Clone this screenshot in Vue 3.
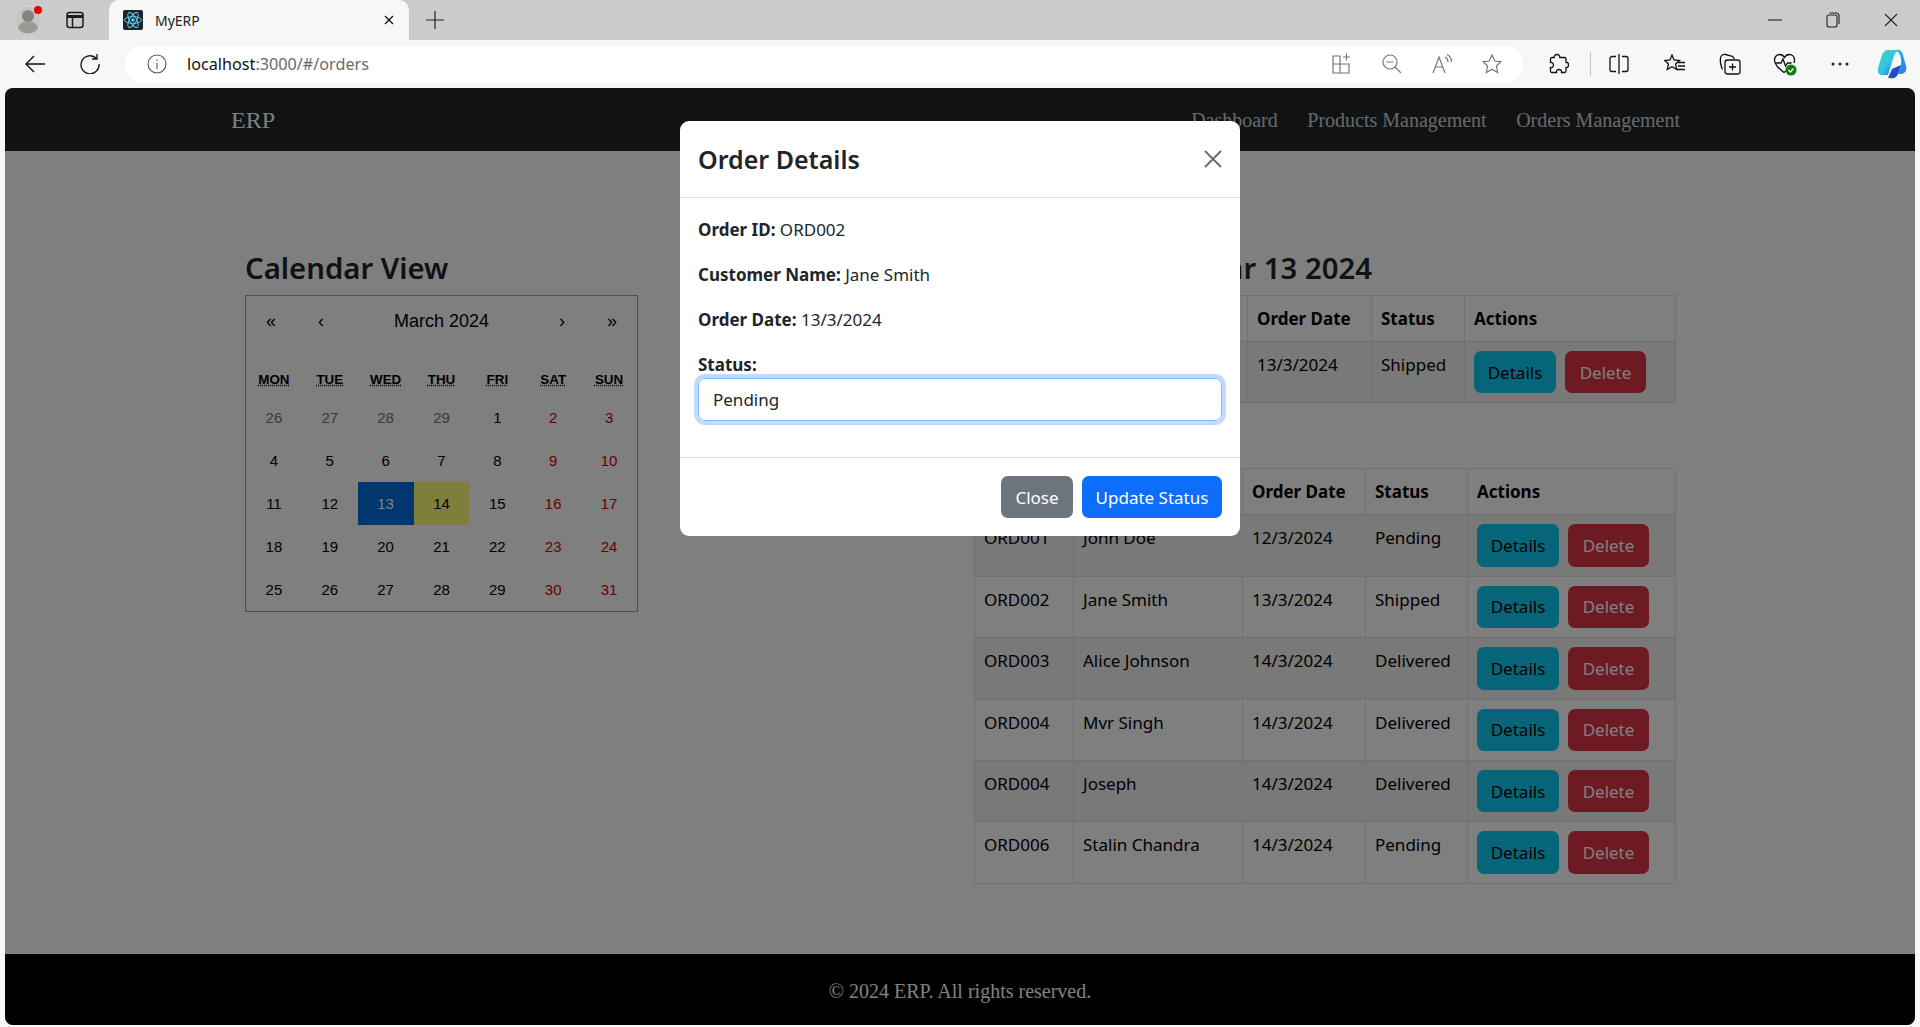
<script setup>
const weekdays = ['Mon', 'Tue', 'Wed', 'Thu', 'Fri', 'Sat', 'Sun']

const days = []
for (const d of [26, 27, 28, 29]) days.push({ n: d, cls: 'other' })
for (let d = 1; d <= 31; d++) {
  const col = days.length % 7
  let cls = col >= 5 ? 'weekend' : ''
  if (d === 13) cls = 'active'
  if (d === 14) cls = 'today'
  days.push({ n: d, cls })
}

const allOrders = [
  { id: 'ORD001', name: 'John Doe', date: '12/3/2024', status: 'Pending' },
  { id: 'ORD002', name: 'Jane Smith', date: '13/3/2024', status: 'Shipped' },
  { id: 'ORD003', name: 'Alice Johnson', date: '14/3/2024', status: 'Delivered' },
  { id: 'ORD004', name: 'Mvr Singh', date: '14/3/2024', status: 'Delivered' },
  { id: 'ORD004', name: 'Joseph', date: '14/3/2024', status: 'Delivered' },
  { id: 'ORD006', name: 'Stalin Chandra', date: '14/3/2024', status: 'Pending' },
]
const dayOrders = allOrders.filter((o) => o.date === '13/3/2024')

const tables = [
  { cls: 'first', title: 'Orders for Wed Mar 13 2024', rows: dayOrders },
  { cls: 'second', title: 'All Orders', rows: allOrders },
]
</script>

<template>
  <div class="window">
    <div class="tabstrip">
      <div class="profile">
        <svg width="32" height="32" viewBox="0 0 32 32">
          <circle cx="16" cy="16" r="14" fill="#c6c5c2" stroke="#d8d8d6" />
          <circle cx="16" cy="12" r="6" fill="#85827e" />
          <path d="M6 25c1-6 5-7.500 10-7.500s9 1.500 10 7.500c-2.500 3-6 4.500-10 4.500s-7.500-1.500-10-4.500z" fill="#9c9994" />
          <circle cx="26" cy="6" r="4" fill="#e60000" />
        </svg>
      </div>
      <svg class="tabs-icon" width="18" height="18" viewBox="0 0 18 18" fill="none" stroke="#1b1b1b" stroke-width="1.500">
        <rect x="1" y="1.500" width="16" height="15" rx="2.500" />
        <path d="M6.500 6v10.500" />
        <path d="M1 5.500h16" stroke-width="3" />
      </svg>
      <div class="tab">
        <svg width="20" height="20" viewBox="0 0 20 20">
          <rect width="20" height="20" rx="2" fill="#20232a" />
          <g fill="none" stroke="#61dafb" stroke-width="0.900">
            <ellipse cx="10" cy="10" rx="8.500" ry="3.400" />
            <ellipse cx="10" cy="10" rx="8.500" ry="3.400" transform="rotate(60 10 10)" />
            <ellipse cx="10" cy="10" rx="8.500" ry="3.400" transform="rotate(120 10 10)" />
          </g>
          <circle cx="10" cy="10" r="1.700" fill="#61dafb" />
        </svg>
        <span class="tab-title">MyERP</span>
        <svg class="tab-close" width="10" height="10" viewBox="0 0 10 10" stroke="#111" stroke-width="1.300">
          <path d="M1 1l8 8M9 1l-8 8" />
        </svg>
      </div>
      <svg class="new-tab" width="18" height="18" viewBox="0 0 18 18" stroke="#222" stroke-width="1.200">
        <path d="M9 0v18M0 9h18" />
      </svg>
      <div class="win-controls">
        <svg width="14" height="14" viewBox="0 0 14 14" stroke="#222" stroke-width="1.100"><path d="M0 7h14" /></svg>
        <svg width="14" height="16" viewBox="0 0 14 16" fill="none" stroke="#222" stroke-width="1.100">
          <rect x="1" y="3" width="10" height="12" rx="2" />
          <path d="M3.500 1h6.500a3 3 0 0 1 3 3v8" />
        </svg>
        <svg width="14" height="14" viewBox="0 0 14 14" stroke="#222" stroke-width="1.100"><path d="M1 1l12 12M13 1L1 13" /></svg>
      </div>
    </div>

    <div class="toolbar">
      <svg class="tool-back" width="22" height="20" viewBox="0 0 22 20" fill="none" stroke="#111" stroke-width="1.400">
        <path d="M21 10H2M10 2l-8 8 8 8" />
      </svg>
      <svg class="tool-reload" width="20" height="20" viewBox="0 0 20 20" fill="none" stroke="#111" stroke-width="1.300">
        <path d="M16.500 4.500A9 9 0 1 0 19 10" />
        <path d="M17 0v5h-5" />
      </svg>
      <div class="address">
        <svg width="20" height="20" viewBox="0 0 20 20" fill="none" stroke="#555" stroke-width="1.100">
          <circle cx="10" cy="10" r="9" />
          <path d="M10 9v6M10 5.500v1.500" />
        </svg>
        <span class="url"><span class="host">localhost</span>:3000/#/orders</span>
        <div class="addr-icons">
          <svg width="20" height="22" viewBox="0 0 20 22" fill="none" stroke="#777" stroke-width="1.200">
            <path d="M1 3h7v8h9v9H1zM1 11h7v9M8 11v9" />
            <path d="M11 4h7M14.500 0.500v7" />
          </svg>
          <svg width="20" height="20" viewBox="0 0 20 20" fill="none" stroke="#777" stroke-width="1.200">
            <circle cx="8" cy="8" r="7" />
            <path d="M4.500 8h7M13 13l6 6" />
          </svg>
          <svg width="20" height="20" viewBox="0 0 20 20" fill="none" stroke="#777" stroke-width="1.200">
            <path d="M1 19L7 3l6 16M3 13h8" />
            <path d="M13 3c2 1 3 3 3 5M15 0.500c3 1.500 4.500 4.500 4.500 7.500" />
          </svg>
          <svg width="20" height="20" viewBox="0 0 20 20" fill="none" stroke="#777" stroke-width="1.200">
            <path d="M10 1l2.800 6 6.200.700-4.600 4.300 1.300 6.500L10 15.300 4.300 18.500 5.600 12 1 7.700 7.200 7z" />
          </svg>
        </div>
      </div>
      <div class="tool-icons">
        <svg class="ic-ext" width="20" height="22" viewBox="0 0 20 22" fill="none" stroke="#111" stroke-width="1.300">
          <path d="M8 1.500c2 0 3 1.500 2.800 3h4.700a1.500 1.500 0 0 1 1.500 1.500v3.500c2-.5 2.500 1 2.500 2.500s-1 3-2.500 2.500V18a1.500 1.500 0 0 1-1.500 1.500h-3c.5-2-1-3-2.500-3s-3 1-2.500 3H3A1.500 1.500 0 0 1 1.500 18v-3.500c2 .5 3-1 3-2.500S3 9 1.500 9.500V6A1.500 1.500 0 0 1 3 4.500h2.200C5 3 6 1.500 8 1.500z" />
        </svg>
        <span class="sep"></span>
        <svg class="ic-split" width="20" height="20" viewBox="0 0 20 20" fill="none" stroke="#111" stroke-width="1.300">
          <path d="M7 2.500H3A2 2 0 0 0 1 4.500v11a2 2 0 0 0 2 2h4M13 2.500h4a2 2 0 0 1 2 2v11a2 2 0 0 1-2 2h-4M10 0v20" />
        </svg>
        <svg class="ic-fav" width="22" height="20" viewBox="0 0 22 20" fill="none" stroke="#111" stroke-width="1.300">
          <path d="M8 1l2 5 5.500.500-4 3.500 1.300 5.500L8 12.700 3.200 15.500 4.500 10 .8 6.500 6 6z" />
          <path d="M14 8.500h7M14 12h7M13 15.500h8" />
        </svg>
        <svg class="ic-coll" width="22" height="22" viewBox="0 0 22 22" fill="none" stroke="#111" stroke-width="1.300">
          <rect x="6" y="7" width="15" height="14" rx="2.500" />
          <path d="M13.500 10.500v7M10 14h7" />
          <path d="M3.500 16.500C2 13 1 8 1.500 5 2 2.500 4 1 6.500 1.500l6 1.500c1.500.5 2.500 1.500 2.500 3" />
        </svg>
        <svg class="ic-heart" width="24" height="24" viewBox="0 0 24 24" fill="none" stroke="#111" stroke-width="1.300">
          <path d="M13 19l-2 1.500C6 16.500 1.500 13 1.500 8 1.500 4.500 4 2.500 6.500 2.500c2 0 4 1 5 3 1-2 3-3 5-3 2.500 0 5 2 5 5.500 0 1-.2 2-.5 3" />
          <path d="M2.500 11H8l2-4 2.500 7 2-3h4" />
          <circle cx="18" cy="18" r="5.500" fill="#107c10" stroke="none" />
          <path d="M15.500 18l2 2 3-3.500" stroke="#fff" stroke-width="1.200" />
        </svg>
        <svg class="ic-dots" width="18" height="4" viewBox="0 0 18 4" fill="#222">
          <circle cx="2" cy="2" r="1.500" /><circle cx="9" cy="2" r="1.500" /><circle cx="16" cy="2" r="1.500" />
        </svg>
        <svg class="ic-copilot" width="30" height="32" viewBox="0 0 30 32">
          <defs>
            <linearGradient id="cpA" x1="0" y1="0" x2="1" y2="1">
              <stop offset="0" stop-color="#2fc6e8" />
              <stop offset="1" stop-color="#2b6fe0" />
            </linearGradient>
            <linearGradient id="cpB" x1="0" y1="0" x2="1" y2="1">
              <stop offset="0" stop-color="#3ddc97" />
              <stop offset="0.500" stop-color="#35c3ea" />
              <stop offset="1" stop-color="#1f55d8" />
            </linearGradient>
          </defs>
          <path d="M11 2c-3 0-5 2-6 5L1 20c-1 4 1 7 4 7h6l5-16c1-4 3-8 7-9z" fill="url(#cpB)" />
          <path d="M19 2c4-1 6 1 7 5l3 11c1 4-1 8-5 8h-3l3-10c1-5-1-11-5-14z" fill="url(#cpA)" />
          <path d="M13 30c4 1 7-1 8-4l3-9-9 4-4 9z" fill="#1f4fd0" />
        </svg>
      </div>
    </div>

    <div class="page">
      <nav class="navbar">
        <span class="brand">ERP</span>
        <div class="nav-links">
          <a>Dashboard</a>
          <a>Products Management</a>
          <a>Orders Management</a>
        </div>
      </nav>

      <main class="content">
        <section>
          <h3>Calendar View</h3>
          <div class="calendar">
            <div class="cal-nav">
              <button>«</button>
              <button>‹</button>
              <span class="cal-label">March 2024</span>
              <button>›</button>
              <button>»</button>
            </div>
            <div class="cal-weekdays">
              <div v-for="w in weekdays" :key="w"><abbr>{{ w }}</abbr></div>
            </div>
            <div class="cal-days">
              <div v-for="(d, i) in days" :key="i" class="tile" :class="d.cls">{{ d.n }}</div>
            </div>
          </div>
        </section>

        <section>
          <template v-for="t in tables" :key="t.cls">
            <h3>{{ t.title }}</h3>
            <table class="orders" :class="t.cls">
              <colgroup><col /><col /><col /><col /><col /></colgroup>
              <thead>
                <tr>
                  <th>Order ID</th>
                  <th>Customer Name</th>
                  <th>Order Date</th>
                  <th>Status</th>
                  <th>Actions</th>
                </tr>
              </thead>
              <tbody>
                <tr v-for="(o, i) in t.rows" :key="i">
                  <td>{{ o.id }}</td>
                  <td>{{ o.name }}</td>
                  <td>{{ o.date }}</td>
                  <td>{{ o.status }}</td>
                  <td>
                    <div class="actions">
                      <button class="btn btn-info">Details</button>
                      <button class="btn btn-danger">Delete</button>
                    </div>
                  </td>
                </tr>
              </tbody>
            </table>
          </template>
        </section>
      </main>

      <footer class="footer">© 2024 ERP. All rights reserved.</footer>

      <div class="backdrop">
        <div class="modal">
          <div class="modal-header">
            <h5>Order Details</h5>
            <svg width="18" height="18" viewBox="0 0 18 18" stroke="#6b6b6b" stroke-width="1.900">
              <path d="M1 1l16 16M17 1L1 17" />
            </svg>
          </div>
          <div class="modal-body">
            <p><strong>Order ID:</strong> ORD002</p>
            <p><strong>Customer Name:</strong> Jane Smith</p>
            <p><strong>Order Date:</strong> 13/3/2024</p>
            <label>Status:</label>
            <div class="select">Pending</div>
          </div>
          <div class="modal-footer">
            <button class="btn btn-secondary">Close</button>
            <button class="btn btn-primary">Update Status</button>
          </div>
        </div>
      </div>
    </div>
  </div>
</template>

<style>
html,
body {
  margin: 0;
  background: #f7f7f7;
}
</style>

<style scoped>
* {
  box-sizing: border-box;
}

.window {
  display: flex;
  flex-direction: column;
  height: 1027px;
  overflow: hidden;
  font-family: 'Noto Sans', sans-serif;
  color: #212529;
}

/* browser chrome */
.tabstrip {
  display: flex;
  align-items: center;
  height: 40px;
  flex: none;
  background: #cccccc;
}

.profile {
  display: flex;
  margin-left: 12px;
}

.tabs-icon {
  margin-left: 22px;
}

.tab {
  display: flex;
  align-items: center;
  align-self: stretch;
  width: 300px;
  margin-left: 25px;
  padding-left: 14px;
  background: #f7f7f7;
  border-radius: 10px 10px 0 0;
}

.tab-title {
  margin-left: 12px;
  font-size: 14px;
  color: #222;
}

.tab-close {
  margin-left: auto;
  margin-right: 15px;
}

.new-tab {
  margin-left: 17px;
}

.win-controls {
  display: flex;
  align-items: center;
  gap: 44px;
  margin-left: auto;
  margin-right: 22px;
}

.toolbar {
  display: flex;
  align-items: center;
  height: 48px;
  flex: none;
  background: #f7f7f7;
}

.tool-back {
  margin-left: 24px;
}

.tool-reload {
  margin-left: 34px;
}

.address {
  display: flex;
  align-items: center;
  width: 1398px;
  height: 37px;
  margin-left: 25px;
  padding-left: 22px;
  background: #fff;
  border-radius: 18px;
}

.url {
  margin-left: 20px;
  font-size: 16.200px;
  color: #6a6a6a;
}

.host {
  color: #111;
}

.addr-icons {
  display: flex;
  align-items: center;
  gap: 30px;
  margin-left: auto;
  margin-right: 21px;
}

.tool-icons {
  display: flex;
  align-items: center;
  flex: 1;
}

.ic-ext {
  margin-left: 26px;
}

.sep {
  width: 1px;
  height: 24px;
  margin-left: 21px;
  background: #c8c8c8;
}

.ic-split {
  margin-left: 18px;
}

.ic-fav {
  margin-left: 35px;
}

.ic-coll {
  margin-left: 33px;
}

.ic-heart {
  margin-left: 32px;
}

.ic-dots {
  margin-left: 34px;
}

.ic-copilot {
  margin-left: 28px;
}

/* page */
.page {
  position: relative;
  display: flex;
  flex-direction: column;
  flex: 1;
  margin: 0 5px 2px;
  overflow: hidden;
  background: #fff;
  border-radius: 8px;
}

.navbar {
  display: flex;
  align-items: center;
  justify-content: space-between;
  height: 63px;
  flex: none;
  padding: 1px 235px 0 226px;
  background: #212529;
  font-family: 'Liberation Serif', serif;
}

.brand {
  font-size: 24px;
  color: #fff;
}

.nav-links {
  display: flex;
  gap: 29.500px;
  font-size: 20px;
  color: rgba(255, 255, 255, 0.8);
}

.content {
  display: grid;
  grid-template-columns: 729px 701px;
  flex: 1;
  padding: 98px 0 0 240px;
  font-size: 17px;
  line-height: 27px;
}

h3 {
  margin: 0 0 8px;
  font-size: 29.300px;
  font-weight: 600;
  line-height: 38px;
  white-space: nowrap;
}

.orders + h3 {
  margin-top: 19px;
}

/* calendar */
.calendar {
  width: 393px;
  border: 1px solid #a0a096;
  font-family: 'Liberation Sans', Arial, sans-serif;
  color: #000;
  font-size: 15px;
  line-height: 17px;
}

.cal-nav {
  display: flex;
  align-items: center;
  height: 50px;
  margin-bottom: 18px;
}

.cal-nav button {
  width: 50px;
  height: 50px;
  padding: 0;
  border: 0;
  background: none;
  font: inherit;
  font-size: 18px;
  color: #000;
}

.cal-label {
  flex: 1;
  text-align: center;
  font-size: 18px;
}

.cal-weekdays {
  display: grid;
  grid-template-columns: repeat(7, 1fr);
  height: 32px;
  padding-top: 7px;
  font-size: 13.4px;
  font-weight: 700;
  text-align: center;
  text-transform: uppercase;
}

.cal-weekdays abbr {
  text-decoration: underline dotted;
}

.cal-days {
  display: grid;
  grid-template-columns: repeat(7, 1fr);
  grid-auto-rows: 43px;
}

.tile {
  display: flex;
  align-items: center;
  justify-content: center;
}

.tile.other {
  color: #757575;
}

.tile.weekend {
  color: #d10000;
}

.tile.active {
  background: #006edc;
  color: #fff;
}

.tile.today {
  background: #ffff76;
}

/* tables */
.orders {
  width: 701px;
  table-layout: fixed;
  border-collapse: collapse;
  color: #000;
}

.orders th,
.orders td {
  padding: 9px;
  border: 1px solid #dee2e6;
  text-align: left;
  vertical-align: top;
}

.orders th {
  font-weight: 700;
}

.orders tbody tr:nth-child(odd) {
  background: rgba(0, 0, 0, 0.05);
}

.first col:nth-child(1) { width: 99px; }
.first col:nth-child(2) { width: 174px; }
.first col:nth-child(3) { width: 124px; }
.first col:nth-child(4) { width: 93px; }
.first col:nth-child(5) { width: 211px; }

.second col:nth-child(1) { width: 99px; }
.second col:nth-child(2) { width: 169px; }
.second col:nth-child(3) { width: 123px; }
.second col:nth-child(4) { width: 102px; }
.second col:nth-child(5) { width: 208px; }

.actions {
  display: flex;
  gap: 9px;
}

.btn {
  height: 42.400px;
  padding: 0 12px;
  border: 0;
  border-radius: 7px;
  font: inherit;
  font-size: 17px;
  white-space: nowrap;
}

.btn-info {
  width: 82px;
  background: #0dcaf0;
  color: #000;
}

.btn-danger {
  width: 81px;
  background: #dc3545;
  color: #fff;
}

.btn-secondary {
  width: 72px;
  background: #6c757d;
  color: #fff;
}

.btn-primary {
  width: 140px;
  background: #0d6efd;
  color: #fff;
}

.footer {
  display: flex;
  align-items: center;
  justify-content: center;
  height: 71px;
  flex: none;
  padding-top: 3px;
  background: #000;
  color: #fff;
  font-family: 'Liberation Serif', serif;
  font-size: 20px;
}

/* modal */
.backdrop {
  position: absolute;
  inset: 0;
  display: flex;
  justify-content: center;
  align-items: flex-start;
  padding-top: 33px;
  background: rgba(0, 0, 0, 0.5);
}

.modal {
  width: 560px;
  background: #fff;
  border-radius: 9px;
  font-size: 17px;
  line-height: 27px;
}

.modal-header {
  display: flex;
  align-items: center;
  justify-content: space-between;
  height: 77px;
  padding: 0 18px;
  border-bottom: 1px solid #dee2e6;
}

.modal-header h5 {
  margin: 0;
  font-size: 25px;
  font-weight: 600;
  line-height: 38px;
}

.modal-body {
  padding: 18px 18px 36px;
}

.modal-body p {
  margin: 0 0 18px;
}

.modal-body label {
  display: block;
  font-weight: 700;
}

.select {
  height: 43px;
  padding: 0 14px;
  border: 1px solid #86b7fe;
  border-radius: 7px;
  box-shadow: 0 0 0 4px rgba(13, 110, 253, 0.25);
  line-height: 41px;
}

.modal-footer {
  display: flex;
  justify-content: flex-end;
  gap: 9px;
  padding: 18px;
  border-top: 1px solid #dee2e6;
}
</style>
